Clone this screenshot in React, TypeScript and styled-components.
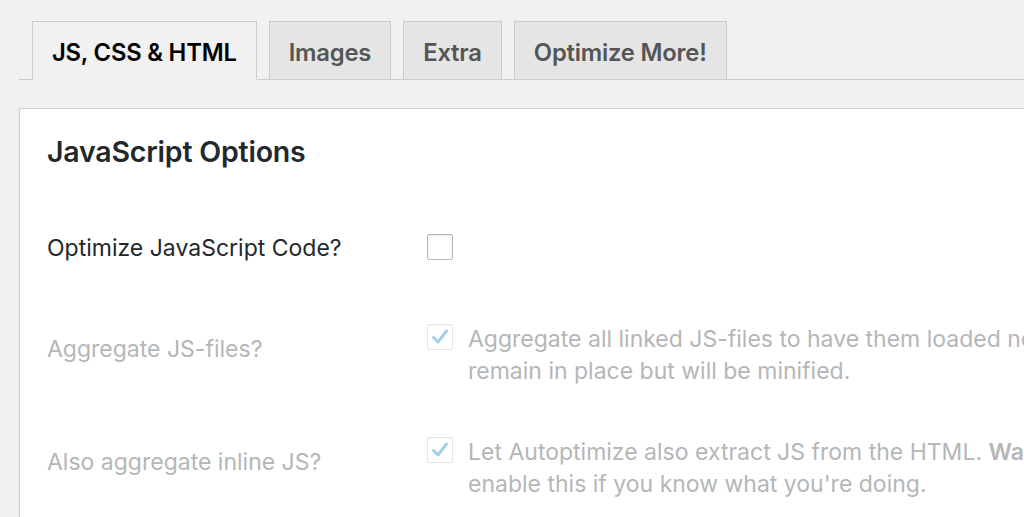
import React from "react";
import styled, { createGlobalStyle } from "styled-components";

const GlobalStyle = createGlobalStyle`
  html, body {
    margin: 0;
    padding: 0;
    background: #f1f1f1;
    overflow: hidden;
  }
  body {
    font-family: Inter, "Noto Sans", "Liberation Sans", sans-serif;
    color: #23282d;
  }
`;

const Page = styled.div`
  padding: 21px 0 0 19px;
`;

const TabBar = styled.nav`
  display: flex;
  gap: 12px;
  padding-left: 13px;
  border-bottom: 1px solid #ccc;
  height: 59px;
  box-sizing: border-box;
`;

const Tab = styled.a<{ $active?: boolean }>`
  display: flex;
  align-items: center;
  padding: 4px 19px 0;
  height: ${(p) => (p.$active ? "59px" : "58px")};
  box-sizing: border-box;
  border: 1px solid #ccc;
  border-bottom: ${(p) => (p.$active ? "1px solid #f1f1f1" : "none")};
  background: ${(p) => (p.$active ? "#f1f1f1" : "#e5e5e5")};
  color: ${(p) => (p.$active ? "#000" : "#555")};
  font-size: 23.8px;
  font-weight: 600;
  letter-spacing: -0.2px;
  text-decoration: none;
  white-space: nowrap;
`;

const Panel = styled.section`
  margin-top: 28px;
  background: #fff;
  border: 1px solid #ccc;
  border-right: none;
  border-bottom: none;
  padding: 27px 0 0 27px;
  min-height: 420px;
`;

const Heading = styled.h2`
  margin: 0 0 54px;
  font-size: 28.5px;
  line-height: 32px;
  font-weight: 600;
  color: #23282d;
  letter-spacing: -0.2px;
`;

const Row = styled.div<{ $disabled?: boolean }>`
  display: grid;
  grid-template-columns: 380px 1fr;
  min-height: 101px;
  padding-bottom: 49px;
  box-sizing: border-box;
  color: ${(p) => (p.$disabled ? "#b4b6b8" : "#23282d")};
  font-size: 23px;
  line-height: 32px;
`;

const Label = styled.div<{ $offset: number }>`
  padding-top: ${(p) => p.$offset}px;
  white-space: nowrap;
`;

const Field = styled.div`
  display: flex;
  align-items: flex-start;
  gap: 15px;
  white-space: nowrap;
`;

const Box = styled.span<{ $disabled?: boolean; $top: number }>`
  flex: none;
  width: 26px;
  height: 26px;
  margin-top: ${(p) => p.$top}px;
  box-sizing: border-box;
  border: 1px solid ${(p) => (p.$disabled ? "#e2e4e6" : "#b4b9be")};
  border-radius: 2px;
  background: #fff;
  box-shadow: inset 0 1px 2px rgba(0, 0, 0, ${(p) => (p.$disabled ? 0.03 : 0.08)});
  display: flex;
  align-items: center;
  justify-content: center;
`;

const Desc = styled.div`
  strong {
    font-weight: 600;
  }
`;

const Check = () => (
  <svg width="20" height="20" viewBox="0 0 20 20">
    <path
      d="M3.5 10.5 L8 15 L16.5 4"
      fill="none"
      stroke="#a2d0e9"
      strokeWidth="3"
      strokeLinecap="round"
      strokeLinejoin="round"
    />
  </svg>
);

export default function App() {
  return (
    <Page>
      <GlobalStyle />
      <TabBar>
        <Tab $active>JS, CSS &amp; HTML</Tab>
        <Tab>Images</Tab>
        <Tab>Extra</Tab>
        <Tab>Optimize More!</Tab>
      </TabBar>
      <Panel>
        <Heading>JavaScript Options</Heading>
        <Row>
          <Label $offset={10}>Optimize JavaScript Code?</Label>
          <Field>
            <Box $top={12} />
          </Field>
        </Row>
        <Row $disabled>
          <Label $offset={10}>Aggregate JS-files?</Label>
          <Field>
            <Box $disabled $top={1}>
              <Check />
            </Box>
            <Desc>
              Aggregate all linked JS-files to have them loaded non-render blocking? If this option is off, the individual JS-files will
              <br />
              remain in place but will be minified.
            </Desc>
          </Field>
        </Row>
        <Row $disabled>
          <Label $offset={10}>Also aggregate inline JS?</Label>
          <Field>
            <Box $disabled $top={1}>
              <Check />
            </Box>
            <Desc>
              Let Autoptimize also extract JS from the HTML. <strong>Warning</strong>: this can make Autoptimize's cache size grow quickly, so only
              <br />
              enable this if you know what you're doing.
            </Desc>
          </Field>
        </Row>
      </Panel>
    </Page>
  );
}
